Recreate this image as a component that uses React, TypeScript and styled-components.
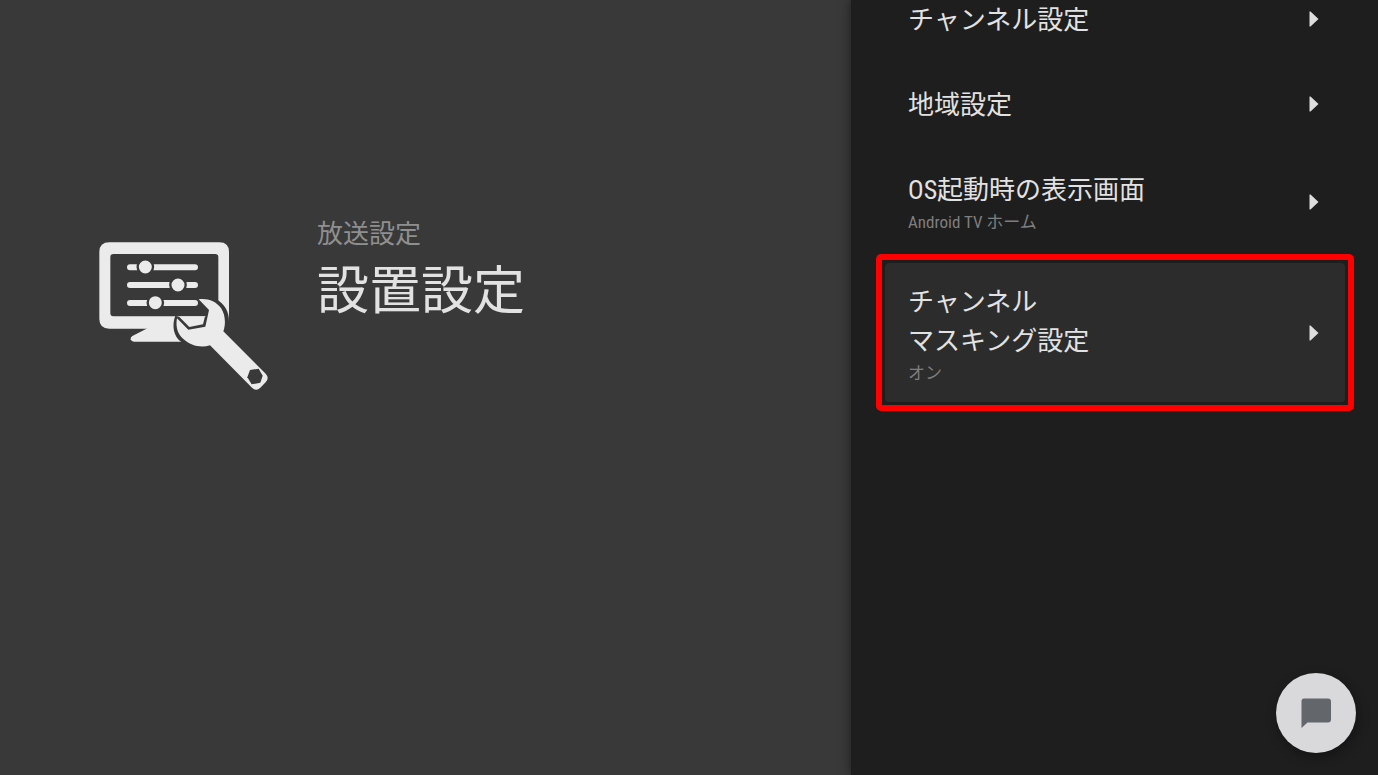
import React from "react";
import styled, { createGlobalStyle } from "styled-components";

const GlobalStyle = createGlobalStyle`
  * { box-sizing: border-box; }
  body {
    margin: 0;
    background: #1e1e1e;
    font-family: "Roboto Condensed", "Liberation Sans Narrow", "Noto Sans CJK JP", sans-serif;
  }
`;

const Screen = styled.div`
  display: flex;
  min-height: 100vh;
  overflow: hidden;
`;

const Overview = styled.header`
  flex: 1;
  display: flex;
  align-items: flex-start;
  gap: 48px;
  padding: 215px 24px 24px 99px;
  background: #393939;
`;

const OverviewIcon = styled.svg`
  flex: none;
  width: 170px;
  height: 150px;
  margin-top: 27px;
`;

const Category = styled.p`
  margin: 0;
  font-size: 26px;
  line-height: 38px;
  color: #8f8f8f;
`;

const Title = styled.h1`
  margin: 0;
  font-size: 52px;
  font-weight: 400;
  line-height: 78px;
  color: #e2e2e2;
`;

const Panel = styled.main`
  flex: 0 0 527px;
  height: 100vh;
  overflow: hidden;
  padding: 0 33px 0 34px;
  background: #1e1e1e;
  box-shadow: 0 0 10px rgba(0, 0, 0, 0.5);
`;

const List = styled.ul`
  list-style: none;
  margin: -24px 0 0;
  padding: 0;
`;

const Item = styled.li<{ $framed?: boolean }>`
  ${({ $framed }) =>
    $framed &&
    `
    margin: -3px -9px 0;
    padding: 3px;
    border: 6px solid #ff0000;
    border-radius: 5px;
  `}
`;

const Row = styled.button<{ $selected?: boolean }>`
  display: flex;
  align-items: center;
  justify-content: space-between;
  width: 100%;
  padding: ${({ $selected }) => ($selected ? "18px 26px 17px 23px" : "23px 26px 23px 23px")};
  border: 0;
  border-radius: 4px;
  background: ${({ $selected }) => ($selected ? "#2c2c2c" : "transparent")};
  font-family: inherit;
  text-align: left;
  cursor: pointer;
`;

const Labels = styled.span`
  display: block;
  margin: 2px 0 -2px;
`;

const Label = styled.span`
  display: block;
  font-size: 26px;
  line-height: 39px;
  color: #e2e2e2;
  white-space: pre-line;
`;

const Value = styled.span`
  display: block;
  padding-bottom: 2px;
  font-size: 17px;
  line-height: 24px;
  color: #7e7e7e;
`;

const Arrow = styled.svg`
  flex: none;
  width: 10px;
  height: 16px;
  fill: #dedede;
`;

const ChatButton = styled.button`
  position: fixed;
  right: 22px;
  bottom: 22px;
  display: flex;
  align-items: center;
  justify-content: center;
  width: 80px;
  height: 80px;
  padding: 0;
  border: 0;
  border-radius: 50%;
  background: #d9d9db;
  box-shadow: 2px 4px 12px rgba(0, 0, 0, 0.35);
  cursor: pointer;
`;

const ChatIcon = styled.svg`
  width: 30px;
  height: 30px;
  fill: #63676c;
`;

const items = [
  { label: "チャンネル設定" },
  { label: "地域設定" },
  { label: "OS起動時の表示画面", value: "Android TV ホーム" },
  { label: "チャンネル\nマスキング設定", value: "オン", selected: true },
];

function SetupIcon() {
  return (
    <OverviewIcon viewBox="27 36 510 450" aria-hidden="true">
      <path
        fill="#ebebeb"
        fillRule="evenodd"
        d="M58 37H388Q417 37 417 66V272L300 296H58Q28 296 28 267V66Q28 37 58 37ZM70 72Q61 72 61 81V250Q61 259 70 259H376Q385 259 385 250V81Q385 72 376 72Z"
      />
      <path fill="#ebebeb" d="M174 294L127 318Q121 322 122 328Q124 335 132 335H310V294Z" />
      <g stroke="#ebebeb" strokeWidth="18" strokeLinecap="round">
        <path d="M120 112H315M120 165H315M120 219H315" />
      </g>
      <g fill="#ebebeb" stroke="#393939" strokeWidth="7">
        <circle cx="166" cy="111" r="23" />
        <circle cx="264" cy="165" r="23" />
        <circle cx="196" cy="218" r="23" />
      </g>
      {/* dark gap that separates the wrench from the monitor */}
      <path
        fill="#393939"
        d="M326 206L378 207C404 221 418 246 417 276L404 310L330 350L274 336C250 320 245 285 256 257L265 260L346 260L356 240Z"
      />
      <path fill="#ebebeb" d="M266 259H345L339 283L298 291Z" />
      <path
        fill="#ebebeb"
        d="M326 208C352 204 378 214 393 234C406 254 408 281 400 304L527 431Q539 444 527 457L511 473Q499 485 486 473L360 346C333 355 301 347 281 328C260 309 257 286 261 265L295 299L346 290L357 240Z"
      />
      <path fill="#393939" d="M480 420L506 416L518 437L511 458L485 463L472 442Z" />
    </OverviewIcon>
  );
}

export default function App() {
  return (
    <>
      <GlobalStyle />
      <Screen>
        <Overview>
          <SetupIcon />
          <div>
            <Category>放送設定</Category>
            <Title>設置設定</Title>
          </div>
        </Overview>
        <Panel>
          <List>
            {items.map(({ label, value, selected }) => (
              <Item key={label} $framed={selected}>
                <Row type="button" $selected={selected}>
                  <Labels>
                    <Label>{label}</Label>
                    {value && <Value>{value}</Value>}
                  </Labels>
                  <Arrow viewBox="0 0 10 16" aria-hidden="true">
                    <path d="M0.5 0.5H1.5L9.5 8L1.5 15.5H0.5Z" />
                  </Arrow>
                </Row>
              </Item>
            ))}
          </List>
        </Panel>
        <ChatButton type="button" aria-label="チャット">
          <ChatIcon viewBox="0 0 30 30" aria-hidden="true">
            <path d="M3 0.5H27Q30 0.5 30 3.5V21.5Q30 24.5 27 24.5H6.500L0.500 30V3.500Q0.500 0.500 3 0.500Z" />
          </ChatIcon>
        </ChatButton>
      </Screen>
    </>
  );
}
